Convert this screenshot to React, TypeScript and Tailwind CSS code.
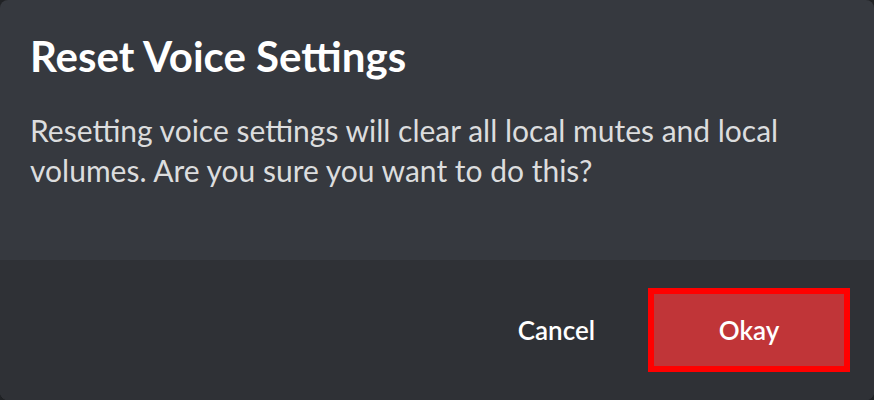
export default function App() {
  return (
    <div className="w-[874px] h-[400px] bg-[#202225]">
      <div className="w-full h-full rounded-[8px] overflow-hidden flex flex-col bg-[#36393f]">
        <div className="flex-1 px-[30px] pt-[30px]">
          <h2 className="font-['Lato',sans-serif] font-bold text-[42px] leading-[52px] text-white">
            Reset Voice Settings
          </h2>
          <p className="mt-[28px] font-['Lato',sans-serif] text-[30px] leading-[40px] text-[#dcddde] pr-[40px]">
            Resetting voice settings will clear all local mutes and local volumes. Are you sure you want to do this?
          </p>
        </div>
        <div className="h-[140px] bg-[#2f3136] flex items-center justify-end pr-[24px] gap-[53px]">
          <button className="font-['Lato',sans-serif] font-semibold text-[26px] text-white">
            Cancel
          </button>
          <div className="border-[6px] border-[#ff0000]">
            <button className="w-[190px] h-[72px] bg-[#c03538] font-['Lato',sans-serif] font-semibold text-[26px] text-white">
              Okay
            </button>
          </div>
        </div>
      </div>
    </div>
  )
}
